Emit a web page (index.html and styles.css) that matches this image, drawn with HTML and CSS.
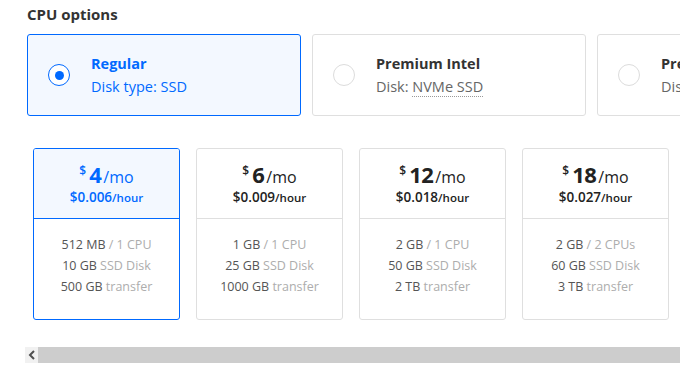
FILE: index.html
```html
<!DOCTYPE html>
<html>
<head>
<meta charset="utf-8">
<link rel="stylesheet" href="styles.css">
</head>
<body>
<div class="page">
  <h2 class="title">CPU options</h2>
  <div class="cpu-row">
    <div class="cpu-card active">
      <span class="radio"><span class="dot"></span></span>
      <div class="cpu-text">
        <div class="cpu-name">Regular</div>
        <div class="cpu-sub">Disk type: SSD</div>
      </div>
    </div>
    <div class="cpu-card">
      <span class="radio"></span>
      <div class="cpu-text">
        <div class="cpu-name">Premium Intel</div>
        <div class="cpu-sub">Disk: <span class="dotted">NVMe SSD</span></div>
      </div>
    </div>
    <div class="cpu-card">
      <span class="radio"></span>
      <div class="cpu-text">
        <div class="cpu-name">Premium AMD</div>
        <div class="cpu-sub">Disk: <span class="dotted">NVMe SSD</span></div>
      </div>
    </div>
  </div>

  <div class="plans-scroll">
    <div class="plans">
      <div class="plan active">
        <div class="plan-head">
          <div class="price"><span class="cur">$</span><span class="amt">4</span><span class="per">/mo</span></div>
          <div class="hour">$0.006<span class="hr">/hour</span></div>
        </div>
        <div class="plan-body">
          <div>512 MB <span class="lt">/ 1 CPU</span></div>
          <div>10 GB <span class="lt">SSD Disk</span></div>
          <div>500 GB <span class="lt">transfer</span></div>
        </div>
      </div>
      <div class="plan">
        <div class="plan-head">
          <div class="price"><span class="cur">$</span><span class="amt">6</span><span class="per">/mo</span></div>
          <div class="hour">$0.009<span class="hr">/hour</span></div>
        </div>
        <div class="plan-body">
          <div>1 GB <span class="lt">/ 1 CPU</span></div>
          <div>25 GB <span class="lt">SSD Disk</span></div>
          <div>1000 GB <span class="lt">transfer</span></div>
        </div>
      </div>
      <div class="plan">
        <div class="plan-head">
          <div class="price"><span class="cur">$</span><span class="amt">12</span><span class="per">/mo</span></div>
          <div class="hour">$0.018<span class="hr">/hour</span></div>
        </div>
        <div class="plan-body">
          <div>2 GB <span class="lt">/ 1 CPU</span></div>
          <div>50 GB <span class="lt">SSD Disk</span></div>
          <div>2 TB <span class="lt">transfer</span></div>
        </div>
      </div>
      <div class="plan">
        <div class="plan-head">
          <div class="price"><span class="cur">$</span><span class="amt">18</span><span class="per">/mo</span></div>
          <div class="hour">$0.027<span class="hr">/hour</span></div>
        </div>
        <div class="plan-body">
          <div>2 GB <span class="lt">/ 2 CPUs</span></div>
          <div>60 GB <span class="lt">SSD Disk</span></div>
          <div>3 TB <span class="lt">transfer</span></div>
        </div>
      </div>
      <div class="plan">
        <div class="plan-head">
          <div class="price"><span class="cur">$</span><span class="amt">24</span><span class="per">/mo</span></div>
          <div class="hour">$0.036<span class="hr">/hour</span></div>
        </div>
        <div class="plan-body">
          <div>4 GB <span class="lt">/ 2 CPUs</span></div>
          <div>80 GB <span class="lt">SSD Disk</span></div>
          <div>4 TB <span class="lt">transfer</span></div>
        </div>
      </div>
    </div>
    <div class="scrollbar">
      <div class="sb-btn">
        <svg width="8" height="10" viewBox="0 0 8 10"><path d="M6 1 L2 5 L6 9" fill="none" stroke="#505050" stroke-width="2"/></svg>
      </div>
      <div class="sb-thumb"></div>
    </div>
  </div>
</div>
</body>
</html>
```

FILE: styles.css
```css
html, body {
  margin: 0;
  padding: 0;
  background: #fff;
  overflow: hidden;
  width: 680px;
  height: 366px;
}
.page {
  font-family: "Open Sans", "Liberation Sans", sans-serif;
  color: #333;
  padding-left: 27px;
  width: 680px;
  box-sizing: border-box;
  overflow: hidden;
}
.title {
  font-size: 15px;
  font-weight: 700;
  margin: 0;
  padding-top: 4px;
  line-height: 20px;
  height: 30px;
  color: #333;
}
.cpu-row {
  display: flex;
  gap: 11px;
}
.cpu-card {
  flex: 0 0 auto;
  width: 274px;
  height: 82px;
  box-sizing: border-box;
  border: 1px solid #dfdfdf;
  border-radius: 3px;
  background: #fff;
  display: flex;
  align-items: center;
  padding-left: 20px;
}
.cpu-card.active {
  border-color: #0069ff;
  background: #f3f8ff;
}
.radio {
  width: 22px;
  height: 22px;
  box-sizing: border-box;
  border: 1px solid #dcdcdc;
  border-radius: 50%;
  background: #fff;
  display: flex;
  align-items: center;
  justify-content: center;
  flex: 0 0 auto;
}
.active .radio {
  border: 1.5px solid #0069ff;
}
.dot {
  width: 9px;
  height: 9px;
  border-radius: 50%;
  background: #0069ff;
}
.cpu-text {
  margin-left: 21px;
  margin-top: -1px;
}
.cpu-name {
  font-size: 14.5px;
  font-weight: 700;
  line-height: 20px;
  color: #333;
}
.active .cpu-name { color: #0069ff; }
.cpu-sub {
  font-size: 14.5px;
  line-height: 18px;
  margin-top: 4px;
  color: #666;
}
.active .cpu-sub { color: #0069ff; }
.dotted {
  border-bottom: 1px dotted #999;
}
.plans-scroll {
  margin-left: -2px;
  margin-top: 32px;
  width: 655px;
  overflow: hidden;
}
.plans {
  display: flex;
  gap: 16px;
  padding-left: 8px;
}
.plan {
  flex: 0 0 auto;
  width: 147px;
  height: 172px;
  box-sizing: border-box;
  border: 1px solid #dfdfdf;
  border-radius: 3px;
  background: #fff;
  text-align: center;
}
.plan.active {
  border-color: #0069ff;
}
.plan-head {
  height: 70px;
  box-sizing: border-box;
  border-bottom: 1px solid #dfdfdf;
  padding-top: 14px;
  color: #222;
}
.plan.active .plan-head {
  background: #f3f8ff;
  border-bottom-color: #0069ff;
  color: #0069ff;
  border-radius: 2px 2px 0 0;
}
.price {
  font-size: 16px;
  line-height: 25px;
  height: 25px;
  white-space: nowrap;
}
.price span {
  line-height: 1;
}
.cur {
  font-size: 12px;
  font-weight: 600;
  vertical-align: 8px;
  margin-right: 3px;
}
.amt {
  font-size: 22px;
  font-weight: 700;
  letter-spacing: -0.5px;
}
.per {
  font-size: 16px;
  margin-left: 2px;
}
.hour {
  font-size: 13.5px;
  font-weight: 600;
  line-height: 16px;
  margin-top: 1px;
  white-space: nowrap;
}
.hr {
  font-size: 11.5px;
}
.plan-body {
  padding-top: 15px;
  font-size: 12.5px;
  line-height: 21px;
  color: #555;
}
.lt {
  color: #adadad;
}
.scrollbar {
  margin-top: 27px;
  height: 16px;
  display: flex;
  background: #f1f1f1;
}
.sb-btn {
  width: 13px;
  height: 16px;
  background: #f1f1f1;
  display: flex;
  align-items: center;
  justify-content: center;
}
.sb-thumb {
  flex: 1;
  background: #cdcdcd;
}
```
